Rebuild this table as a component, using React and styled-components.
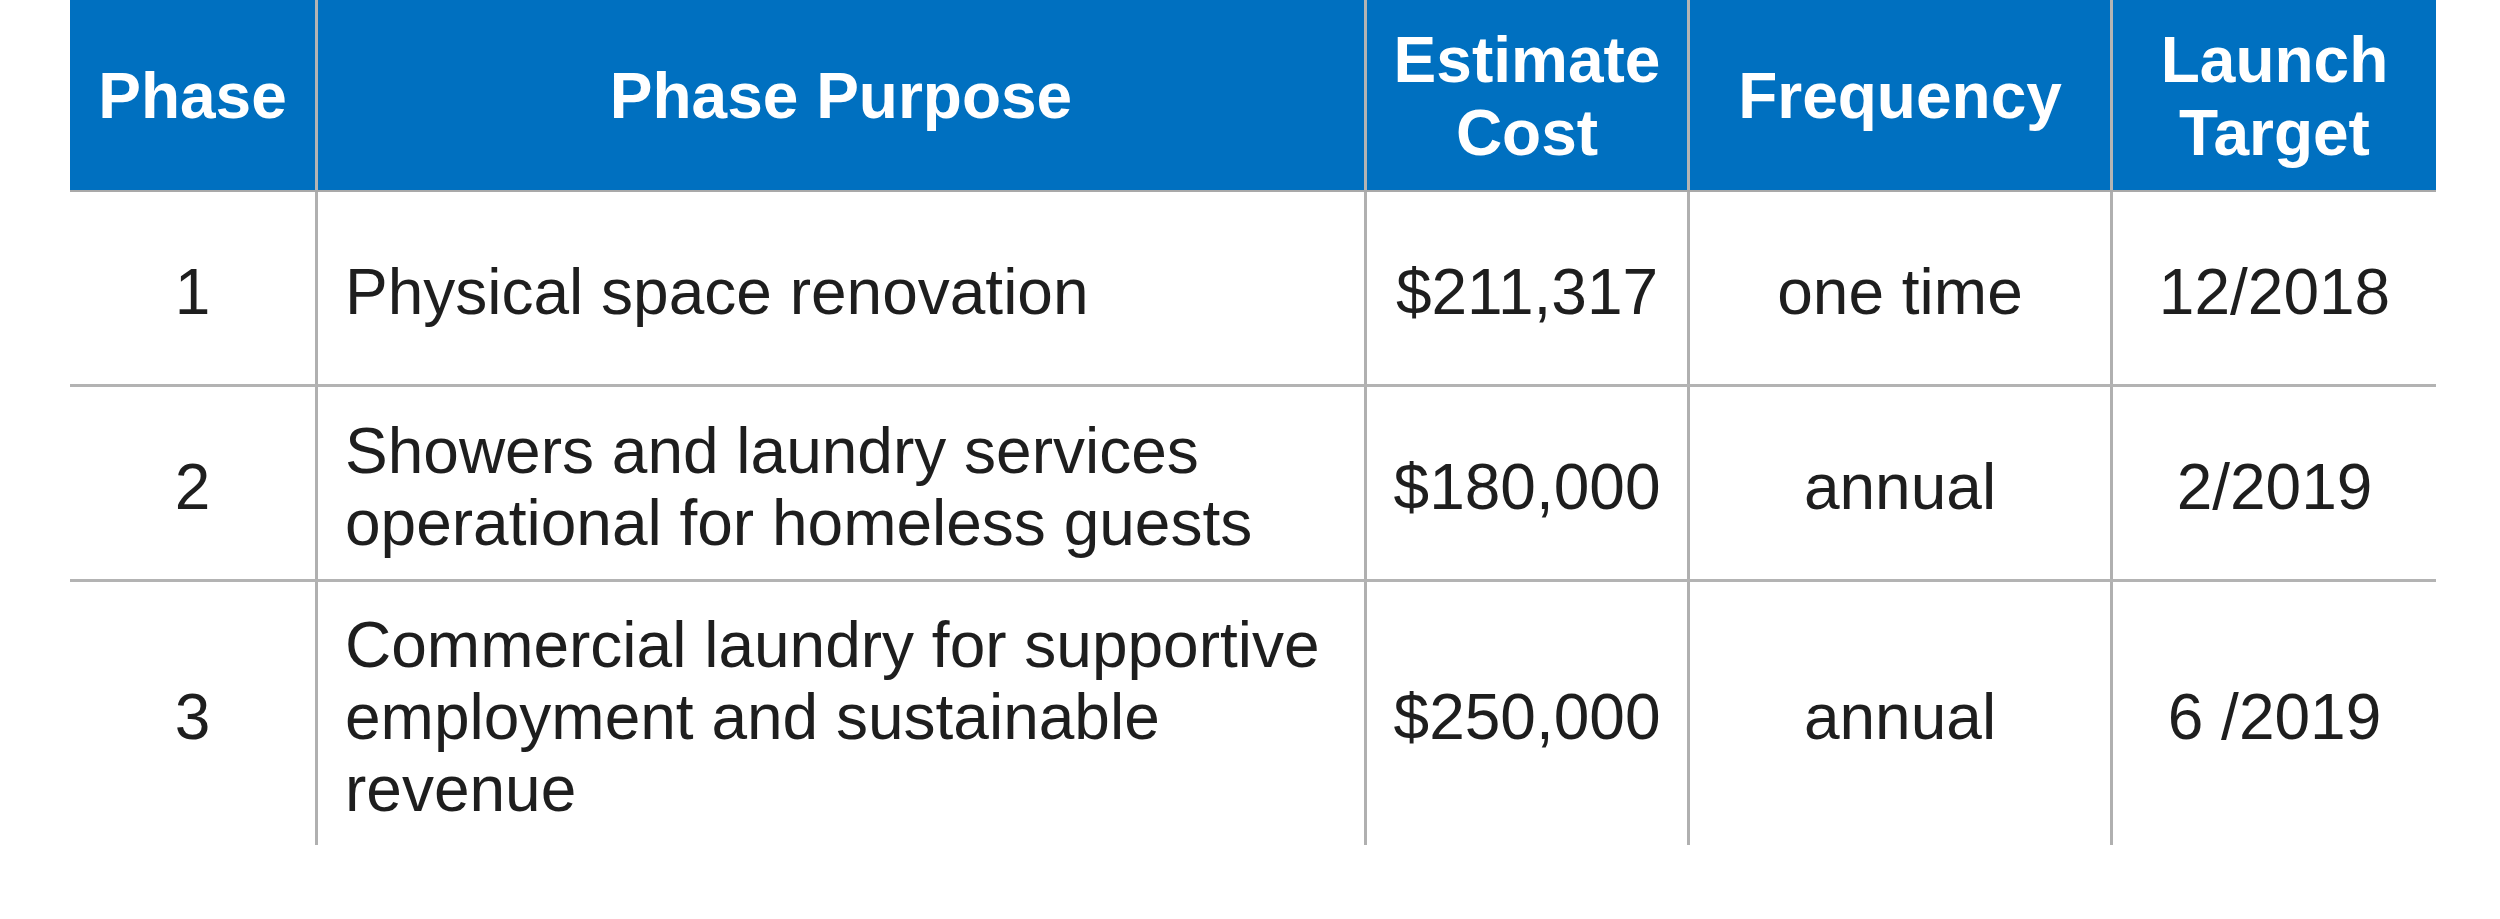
import React from 'react'
import styled, { createGlobalStyle } from 'styled-components'

const GlobalStyle = createGlobalStyle`
  html, body {
    margin: 0;
    padding: 0;
    background: #ffffff;
  }
  body {
    font-family: "Liberation Sans", Arial, sans-serif;
  }
`

const columns = '245px 1049px 323px 423px 326px'

const rows = [
  { phase: '1', purpose: ['Physical space renovation'], cost: '$211,317', freq: 'one time', target: '12/2018', height: 195 },
  { phase: '2', purpose: ['Showers and laundry services', 'operational for homeless guests'], cost: '$180,000', freq: 'annual', target: '2/2019', height: 195 },
  { phase: '3', purpose: ['Commercial laundry for supportive', 'employment and sustainable', 'revenue'], cost: '$250,000', freq: 'annual', target: '6 /2019', height: 263, last: true },
]

const App = () => {
  return (
    <Page>
      <GlobalStyle />
      <Table>
        <HeadRow>
          <HeadCell>Phase</HeadCell>
          <HeadCell $line>Phase Purpose</HeadCell>
          <HeadCell $line>Estimate<br />Cost</HeadCell>
          <HeadCell $line>Frequency</HeadCell>
          <HeadCell $line>Launch<br />Target</HeadCell>
        </HeadRow>
        {rows.map(r => (
          <BodyRow key={r.phase} $height={r.height} $last={r.last}>
            <Cell>{r.phase}</Cell>
            <Cell $line $left>
              <div>
                {r.purpose.map(p => <div key={p}>{p}</div>)}
              </div>
            </Cell>
            <Cell $line>{r.cost}</Cell>
            <Cell $line>{r.freq}</Cell>
            <Cell $line>{r.target}</Cell>
          </BodyRow>
        ))}
      </Table>
    </Page>
  )
}

const Page = styled.div`
  width: 2500px;
  height: 919px;
  padding-left: 70px;
  box-sizing: border-box;
  background: #fff;
`

const Table = styled.div`
  display: flex;
  flex-direction: column;
  width: 2366px;
`

const HeadRow = styled.div`
  display: grid;
  grid-template-columns: ${columns};
  height: 192px;
  box-sizing: border-box;
  background: #0070c0;
  border-bottom: 2px solid #a9a9a9;
`

const BodyRow = styled.div`
  display: grid;
  grid-template-columns: ${columns};
  height: ${p => p.$height}px;
  box-sizing: border-box;
  border-bottom: ${p => (p.$last ? 'none' : '3px solid #b3b3b3')};
`

const HeadCell = styled.div`
  display: flex;
  align-items: center;
  justify-content: center;
  text-align: center;
  box-sizing: border-box;
  padding-top: 3px;
  border-left: ${p => (p.$line ? '3px solid #b4b4b4' : 'none')};
  color: #ffffff;
  font-weight: bold;
  font-size: 64px;
  line-height: 73px;
`

const Cell = styled.div`
  display: flex;
  align-items: center;
  justify-content: ${p => (p.$left ? 'flex-start' : 'center')};
  padding-left: ${p => (p.$left ? '27px' : '0')};
  padding-top: 7px;
  box-sizing: border-box;
  border-left: ${p => (p.$line ? '3px solid #b0b0b0' : 'none')};
  color: #1e1e1e;
  font-size: 64px;
  line-height: 72px;
  white-space: nowrap;
`

export default App
